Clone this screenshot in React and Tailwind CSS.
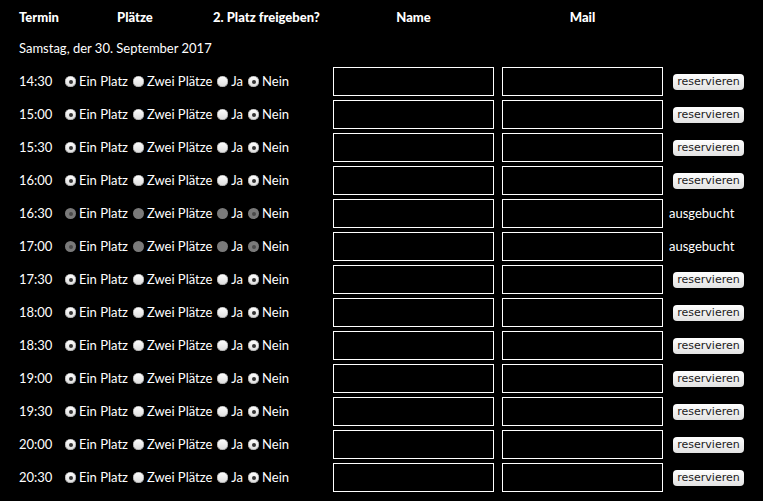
import { useState } from "react";

const slots = [
  { time: "14:30" },
  { time: "15:00" },
  { time: "15:30" },
  { time: "16:00" },
  { time: "16:30", booked: true },
  { time: "17:00", booked: true },
  { time: "17:30" },
  { time: "18:00" },
  { time: "18:30" },
  { time: "19:00" },
  { time: "19:30" },
  { time: "20:00" },
  { time: "20:30" },
];

function Radio({ checked, disabled, label, onClick }) {
  return (
    <label
      className="flex items-center gap-[3px] cursor-pointer"
      onClick={disabled ? undefined : onClick}
    >
      <span
        className={
          "flex items-center justify-center w-[11px] h-[11px] rounded-full " +
          (disabled
            ? "bg-[#7a7a7a]"
            : "bg-gradient-to-b from-[#ffffff] to-[#dcdcdc] shadow-[inset_0_0_0_0.5px_#9a9a9a]")
        }
      >
        {checked && (
          <span
            className={
              "w-[4px] h-[4px] rounded-full " +
              (disabled ? "bg-[#4a4a4a]" : "bg-[#333]")
            }
          />
        )}
      </span>
      <span>{label}</span>
    </label>
  );
}

function SlotRow({ slot }) {
  const [places, setPlaces] = useState(1);
  const [share, setShare] = useState(false);
  const off = !!slot.booked;

  return (
    <div className="flex items-center h-[33px]">
      <div className="w-[46px]">{slot.time}</div>
      <div className="flex items-center w-[268px] gap-[5px]">
        <Radio
          label="Ein Platz"
          checked={places === 1}
          disabled={off}
          onClick={() => setPlaces(1)}
        />
        <Radio
          label="Zwei Plätze"
          checked={places === 2}
          disabled={off}
          onClick={() => setPlaces(2)}
        />
        <Radio
          label="Ja"
          checked={share}
          disabled={off}
          onClick={() => setShare(true)}
        />
        <Radio
          label="Nein"
          checked={!share}
          disabled={off}
          onClick={() => setShare(false)}
        />
      </div>
      <input
        type="text"
        disabled={off}
        className="w-[161px] h-[29px] border border-white bg-black text-white px-1 outline-none"
      />
      <input
        type="text"
        disabled={off}
        className="ml-[8px] w-[161px] h-[29px] border border-white bg-black text-white px-1 outline-none"
      />
      {off ? (
        <span className="ml-[6px]">ausgebucht</span>
      ) : (
        <button className="ml-[10px] w-[71px] h-[16px] rounded-[4px] bg-gradient-to-b from-[#ffffff] to-[#e2e2e2] text-[#1a1a1a] text-[11px] leading-none font-['DejaVu_Sans',sans-serif]">
          reservieren
        </button>
      )}
    </div>
  );
}

export default function App() {
  return (
    <div className="min-h-screen bg-black text-white text-[13px] font-['Lato',sans-serif] pl-[19px]">
      <div className="flex items-center h-[35px] font-black">
        <div className="w-[98px]">Termin</div>
        <div className="w-[96px]">Plätze</div>
        <div className="w-[120px]">2. Platz freigeben?</div>
        <div className="w-[161px] text-center">Name</div>
        <div className="ml-[8px] w-[161px] text-center">Mail</div>
      </div>
      <div className="flex items-center h-[30px] pb-[2px]">
        Samstag, der 30. September 2017
      </div>
      {slots.map((s) => (
        <SlotRow key={s.time} slot={s} />
      ))}
    </div>
  );
}
